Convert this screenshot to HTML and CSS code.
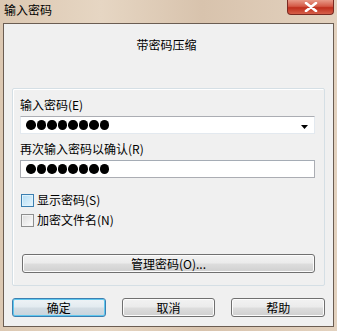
FILE: index.html
```html
<!DOCTYPE html>
<html>
<head>
<meta charset="utf-8">
<link rel="stylesheet" href="styles.css">
</head>
<body>
<div class="window">
  <div class="titlebar">
    <span class="title">输入密码</span>
    <div class="close"><svg width="14" height="10" viewBox="0 0 14 10"><path d="M2 1 L12 9 M12 1 L2 9" stroke="#fff" stroke-width="2.6" stroke-linecap="round"/></svg></div>
  </div>
  <div class="client">
    <div class="header">带密码压缩</div>
    <div class="group">
      <div class="label">输入密码(E)</div>
      <div class="field combo">
        <div class="dots"><span></span><span></span><span></span><span></span><span></span><span></span><span></span><span></span></div>
        <svg class="arrow" width="7" height="4" viewBox="0 0 7 4"><path d="M0 0 H7 L3.5 4 Z" fill="#000"/></svg>
      </div>
      <div class="label label2">再次输入密码以确认(R)</div>
      <div class="field">
        <div class="dots"><span></span><span></span><span></span><span></span><span></span><span></span><span></span><span></span></div>
      </div>
      <div class="check first"><span class="box hot"></span><span>显示密码(S)</span></div>
      <div class="check"><span class="box"></span><span>加密文件名(N)</span></div>
      <div class="btn manage">管理密码(O)...</div>
    </div>
    <div class="buttons">
      <div class="btn def">确定</div>
      <div class="btn">取消</div>
      <div class="btn">帮助</div>
    </div>
  </div>
</div>
</body>
</html>
```
FILE: styles.css
```css
html, body {
  margin: 0;
  padding: 0;
}
body {
  width: 337px;
  height: 331px;
  overflow: hidden;
  font-family: "Noto Sans CJK SC", "Liberation Sans", sans-serif;
  font-size: 12px;
  color: #000;
}
.window {
  width: 337px;
  height: 331px;
  background: linear-gradient(90deg, #dcc8b2 0%, #e6d6c3 30%, #d8c3ad 60%, #e3d2bf 100%);
  display: flex;
  flex-direction: column;
  box-sizing: border-box;
  padding: 0 3px 4px 3px;
}
.titlebar {
  height: 23px;
  position: relative;
  flex: none;
}
.title {
  position: absolute;
  left: 1px;
  top: 2px;
  line-height: 16px;
  font-size: 12px;
}
.close {
  position: absolute;
  right: 0;
  top: 0;
  width: 47px;
  height: 15px;
  box-sizing: border-box;
  border: 1px solid #7a2a22;
  border-top: none;
  border-radius: 0 0 4px 4px;
  background: linear-gradient(#e89a88 0%, #d45a47 45%, #bf2f1d 55%, #d6604a 100%);
  display: flex;
  align-items: center;
  justify-content: center;
}
.client {
  flex: 1;
  border: 1px solid #6b5d52;
  background: #f0f0f0;
  display: flex;
  flex-direction: column;
}
.header {
  height: 64px;
  box-sizing: border-box;
  padding-top: 13px;
  line-height: 16px;
  text-align: center;
  padding-right: 4px;
}
.group {
  margin: 0 8px;
  height: 198px;
  box-sizing: border-box;
  border: 1px solid #d5dfe5;
  box-shadow: inset 1px 1px 0 #fff;
  border-radius: 2px;
  padding: 8px 9px 0 7px;
  display: flex;
  flex-direction: column;
}
.label {
  line-height: 16px;
  height: 16px;
}
.label2 {
  margin-top: 7px;
}
.field {
  margin-top: 3px;
  height: 18px;
  box-sizing: border-box;
  border: 1px solid #abadb3;
  border-top-color: #a5acb5;
  background: #fff;
  display: flex;
  align-items: center;
  padding-left: 5px;
  position: relative;
}
.combo {
  border-color: #e3e9ef;
  border-top-color: #abadb3;
}
.dots {
  display: flex;
  gap: 1px;
}
.dots span {
  width: 9.5px;
  height: 9.5px;
  border-radius: 50%;
  background: #000;
}
.arrow {
  position: absolute;
  right: 6px;
  top: 8px;
}
.check {
  display: flex;
  align-items: center;
  height: 16px;
  line-height: 16px;
  margin-top: 4px;
  padding-left: 1px;
  gap: 3px;
}
.check.first {
  margin-top: 14px;
}
.box {
  width: 13px;
  height: 13px;
  box-sizing: border-box;
  border: 1px solid #8e8f8f;
  background: linear-gradient(135deg, #dcdcdc, #fefefe);
  box-shadow: inset 0 0 0 1px #f4f4f4;
}
.box.hot {
  border-color: #3c7fb1;
  background: linear-gradient(135deg, #b1dcf5, #e8f6fd);
  box-shadow: inset 0 0 0 1px #def3fd;
}
.btn {
  height: 19px;
  box-sizing: border-box;
  border: 1px solid #707070;
  border-radius: 3px;
  background: linear-gradient(#f2f2f2 0%, #ebebeb 48%, #dddddd 52%, #cfcfcf 100%);
  box-shadow: inset 0 0 0 1px #fcfcfc;
  display: flex;
  align-items: center;
  justify-content: center;
  line-height: 16px;
}
.manage {
  margin-top: 26px;
  margin-left: 2px;
}
.buttons {
  margin: 12px 8px 0 8px;
  display: flex;
  gap: 16px;
}
.buttons .btn {
  width: 94px;
}
.btn.def {
  border-color: #3c7fb1;
  box-shadow: inset 0 0 0 1px #5fc8ef;
  background: linear-gradient(#eef3f6 0%, #e3ebf0 48%, #d3dde4 52%, #c8d4dc 100%);
}
```
